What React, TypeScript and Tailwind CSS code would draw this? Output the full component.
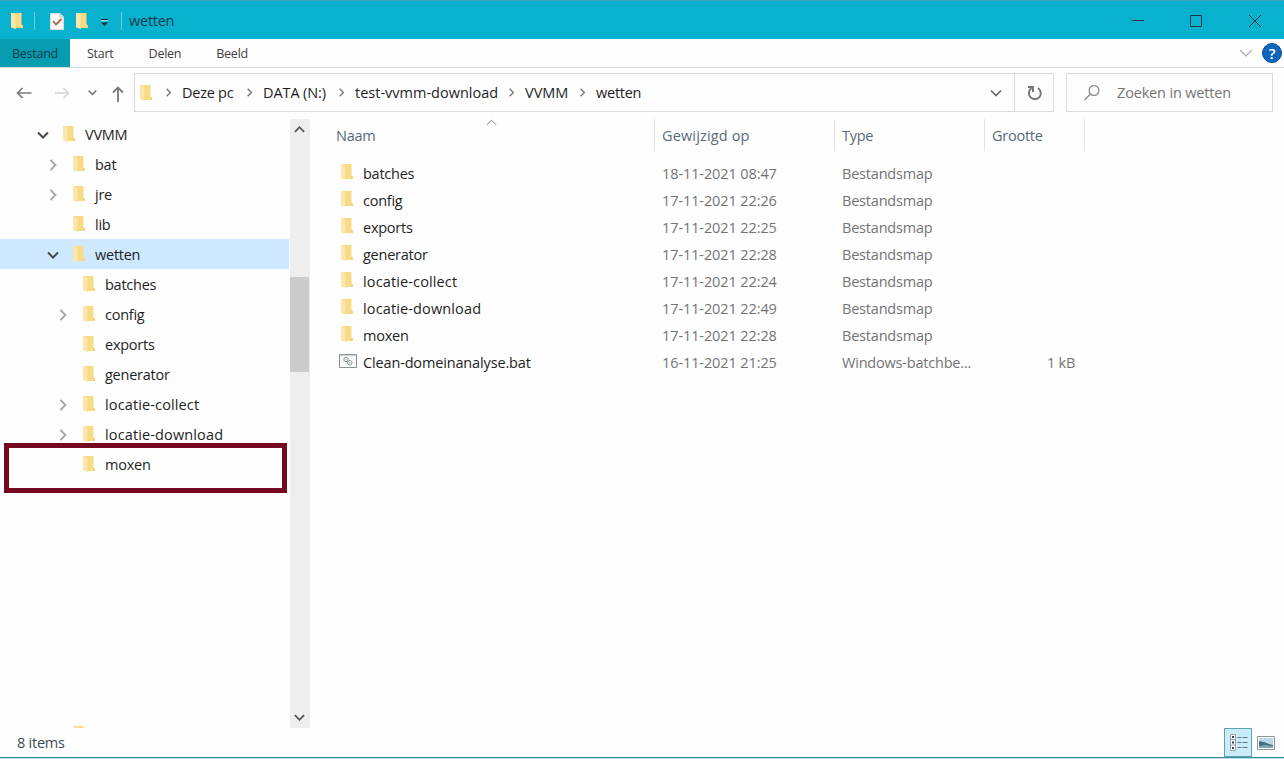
// ============================================
// File Explorer window: title bar, ribbon, address bar, folder tree and file list
// ============================================

import type { ReactNode } from "react"
import { clsx } from "clsx"

type TreeItem = {
  name: string
  level: 0 | 1 | 2
  state?: "open" | "closed"
  selected?: boolean
}

type FileItem = {
  name: string
  date: string
  type: string
  size?: string
}

const TREE: TreeItem[] = [
  { name: "VVMM", level: 0, state: "open" },
  { name: "bat", level: 1, state: "closed" },
  { name: "jre", level: 1, state: "closed" },
  { name: "lib", level: 1 },
  { name: "wetten", level: 1, state: "open", selected: true },
  { name: "batches", level: 2 },
  { name: "config", level: 2, state: "closed" },
  { name: "exports", level: 2 },
  { name: "generator", level: 2 },
  { name: "locatie-collect", level: 2, state: "closed" },
  { name: "locatie-download", level: 2, state: "closed" },
  { name: "moxen", level: 2 },
]

const FILES: FileItem[] = [
  { name: "batches", date: "18-11-2021 08:47", type: "Bestandsmap" },
  { name: "config", date: "17-11-2021 22:26", type: "Bestandsmap" },
  { name: "exports", date: "17-11-2021 22:25", type: "Bestandsmap" },
  { name: "generator", date: "17-11-2021 22:28", type: "Bestandsmap" },
  { name: "locatie-collect", date: "17-11-2021 22:24", type: "Bestandsmap" },
  { name: "locatie-download", date: "17-11-2021 22:49", type: "Bestandsmap" },
  { name: "moxen", date: "17-11-2021 22:28", type: "Bestandsmap" },
  { name: "Clean-domeinanalyse.bat", date: "16-11-2021 21:25", type: "Windows-batchbe...", size: "1 kB" },
]

const INDENT = { 0: "pl-[36px]", 1: "pl-[46px]", 2: "pl-[56px]" }

function nameTracking(name: string) {
  if (name.startsWith("locatie")) return "tracking-[0.13px]"
  if (name.startsWith("Clean")) return "tracking-[-0.15px]"
  return ""
}

function Folder({ className }: { className?: string }) {
  return (
    <svg className={clsx("h-4 w-3 shrink-0", className)} viewBox="0 0 12 16">
      <path d="M0 0h10.500v11.500l1.500 1V15H3L0 13.500z" fill="#f8dc85" />
      <path d="M0 0h1l4 2v14l-5-1.500z" fill="#fbe6ac" />
      <path d="M5 2v13" stroke="#f1d37b" strokeWidth=".6" />
      <path d="M10 11.500l2 1V15h-2z" fill="#f1d48a" />
    </svg>
  )
}

const CHEVRONS = {
  down: "M1 3.5l5 5 5-5",
  up: "M1 8.5l5-5 5 5",
  right: "M3.5 1l5 5-5 5",
}

function Chevron({ dir, className }: { dir: keyof typeof CHEVRONS; className?: string }) {
  return (
    <svg className={clsx("shrink-0", className)} viewBox="0 0 12 12" fill="none" stroke="currentColor">
      <path d={CHEVRONS[dir]} />
    </svg>
  )
}

function TitleBar() {
  return (
    <header className="flex h-[39px] shrink-0 items-center border-t border-[#3fa5b3] bg-[#08b2cf] pl-[11px] pt-0.5 text-[#123c4a]">
      <Folder />
      <div className="ml-[11px] h-[18px] w-px bg-[#63cfdf]" />
      <svg className="ml-[15px] h-[17px] w-[14px]" viewBox="0 0 14 17">
        <path d="M.5.5H10L13.5 4v12.5H.5z" fill="#fbf7f5" stroke="#d5dddd" />
        <path d="M10 .5V4h3.5" fill="none" stroke="#b9c8c8" />
        <path d="M3 8l3 3.5L11.5 6" fill="none" stroke="#a8654f" strokeWidth="1.8" />
      </svg>
      <Folder className="ml-3" />
      <svg className="ml-[13px] mt-1 h-2 w-[7px]" viewBox="0 0 7 8">
        <path d="M0 .5h7" stroke="#0d2c36" />
        <path d="M0 1.5h7" stroke="#9fdde8" />
        <path d="M0 3.5h7L3.5 7z" fill="#0d2c36" />
      </svg>
      <div className="ml-[13px] h-[18px] w-px bg-[#63cfdf]" />
      <span className="ml-[7px]">wetten</span>
      <div className="ml-auto flex items-center text-[#153a44]">
        <svg className="mr-[46px] size-3" viewBox="0 0 12 12" stroke="currentColor">
          <path d="M0 5.5h12" />
        </svg>
        <svg className="mr-[47px] size-3" viewBox="0 0 12 12" fill="none" stroke="currentColor">
          <path d="M.5.5h11v11H.5z" />
        </svg>
        <svg className="mr-[23px] size-3" viewBox="0 0 12 12" stroke="currentColor">
          <path d="M0 0l12 12M12 0L0 12" />
        </svg>
      </div>
    </header>
  )
}

function Ribbon() {
  return (
    <nav className="flex h-[29px] shrink-0 items-center border-b border-[#d9dbdb] text-[12.5px] tracking-[-0.25px] text-[#3d3d3d]">
      <div className="flex h-full w-[70px] items-center justify-center bg-[#079cb1] pt-0.5 text-[#103b45]">Bestand</div>
      <span className="ml-[17px] pt-0.5">Start</span>
      <span className="ml-[35px] pt-0.5">Delen</span>
      <span className="ml-[35px] pt-0.5">Beeld</span>
      <Chevron dir="down" className="ml-auto mr-[9px] size-[14px] text-[#a2a8ab]" />
      <div className="mr-[2px] flex size-5 items-center justify-center rounded-full border border-[#0b4e93] bg-[#0c66bd] text-[15px] font-semibold text-white">
        ?
      </div>
    </nav>
  )
}

function Crumb({ children, className }: { children: ReactNode; className?: string }) {
  return (
    <>
      <Chevron dir="right" className="size-[9px] stroke-[1.8px] text-[#777]" />
      <span className={clsx("ml-[9px] whitespace-nowrap", className)}>{children}</span>
    </>
  )
}

function AddressBar() {
  return (
    <div className="flex h-[51px] shrink-0 items-start pt-[5px]">
      <div className="flex h-[39px] w-[134px] shrink-0 items-center pl-4 text-[#7a7a7a]">
        <svg className="h-3 w-4" viewBox="0 0 16 12" fill="none" stroke="currentColor" strokeWidth="1.7">
          <path d="M15.500 6H1.500M6.500 1l-5 5 5 5" />
        </svg>
        <svg className="ml-[22px] h-3 w-4 text-[#d6d6d6]" viewBox="0 0 16 12" fill="none" stroke="currentColor" strokeWidth="1.5">
          <path d="M1 6h13.500M9.500 1l5 5-5 5" />
        </svg>
        <Chevron dir="down" className="ml-[18px] size-[9px] stroke-2" />
        <svg className="ml-[15px] mt-0.5 h-4 w-3" viewBox="0 0 12 16" fill="none" stroke="currentColor" strokeWidth="1.8">
          <path d="M6 16V1.500M1 6.500l5-5 5 5" />
        </svg>
      </div>
      <div className="flex h-[39px] w-[920px] shrink-0 items-center border border-[#d9d9d9] pl-[5px]">
        <Folder className="mr-3" />
        <Crumb className="w-[63px]">Deze pc</Crumb>
        <Crumb className="w-[74px] tracking-[-0.1px]">DATA (N:)</Crumb>
        <Crumb className="w-[152px] tracking-[0px]">test-vvmm-download</Crumb>
        <Crumb className="w-[53px] tracking-[0px]">VVMM</Crumb>
        <Crumb>wetten</Crumb>
        <Chevron dir="down" className="ml-auto mr-3 size-3 stroke-[1.7px] text-[#666]" />
        <div className="flex h-full w-[39px] items-center justify-center border-l border-[#d9d9d9] pl-0.5">
          <svg className="h-4 w-4 text-[#777]" viewBox="0 0 16 16" fill="none" stroke="currentColor" strokeWidth="2">
            <path d="M11 3.100A6 6 0 1 1 4.500 3.200" />
            <path d="M1 2h5v5" />
          </svg>
        </div>
      </div>
      <div className="ml-3 flex h-[39px] w-[207px] items-center border border-[#d9d9d9] pl-[17px] text-[#757575]">
        <svg className="size-4" viewBox="0 0 16 16" fill="none" stroke="#858585" strokeWidth="1.2">
          <circle cx="10" cy="5.500" r="4.900" />
          <path d="M6.500 9L.5 15" />
        </svg>
        <span className="ml-[17px] whitespace-nowrap tracking-[-0.17px]">Zoeken in wetten</span>
      </div>
    </div>
  )
}

function FolderTree() {
  return (
    <aside className="relative flex w-[289px] shrink-0 flex-col">
      {TREE.map((item) => (
        <div
          key={item.name}
          className={clsx("flex h-[30px] shrink-0 items-center", INDENT[item.level], item.selected && "bg-[#cde8ff]")}
        >
          <div className="flex w-[13px] justify-center pt-0.5">
            {item.state === "open" && <Chevron dir="down" className="size-3 stroke-2 text-[#45494b]" />}
            {item.state === "closed" && <Chevron dir="right" className="size-3 stroke-[1.8px] text-[#a6a6a6]" />}
          </div>
          <Folder className="ml-[14px]" />
          <span className={clsx("ml-[10px] pt-0.5", nameTracking(item.name))}>{item.name}</span>
        </div>
      ))}
      <div className="ml-[73px] mt-auto h-[2px] w-3 overflow-hidden">
        <Folder />
      </div>
      {/* highlight around the moxen folder */}
      <div className="absolute left-1 top-[324px] h-[50px] w-[283px] border-[5px] border-[#75091f]" />
    </aside>
  )
}

function Scrollbar() {
  return (
    <div className="ml-px flex w-5 shrink-0 flex-col items-center bg-[#eeeeee] pr-px text-[#555]">
      <div className="flex h-[158px] shrink-0 justify-center pt-[5px]">
        <Chevron dir="up" className="size-[11px] stroke-2" />
      </div>
      <div className="h-[95px] w-[19px] shrink-0 bg-[#cbcbcb]" />
      <Chevron dir="down" className="mb-[5px] mt-auto size-[11px] stroke-2" />
    </div>
  )
}

function BatchIcon() {
  return (
    <svg className="h-[14px] w-[18px]" viewBox="0 0 18 14" fill="none">
      <path d="M.5.5h17v13H.5z" fill="#fafafa" stroke="#8a8f91" />
      <path d="M1 1h16" stroke="#9da3a5" />
      <circle cx="7" cy="5.500" r="2.200" stroke="#8b969b" />
      <circle cx="7" cy="5.500" r=".6" fill="#8b969b" />
      <circle cx="10.800" cy="8.700" r="2.200" stroke="#8b969b" />
      <circle cx="10.800" cy="8.700" r=".6" fill="#8b969b" />
    </svg>
  )
}

function FileList() {
  return (
    <main className="flex w-[775px] flex-col">
      <div className="flex h-8 items-center text-[#5a6a79]">
        <div className="relative flex h-full w-[345px] items-center border-r border-[#e3e3e3] pl-[26px] pt-0.5">
          Naam
          <Chevron dir="up" className="absolute left-[176px] top-[-2px] size-[11px] text-[#777]" />
        </div>
        <div className="flex h-full w-[180px] items-center border-r border-[#e3e3e3] pl-[7px] pt-0.5 tracking-[0.15px]">
          Gewijzigd op
        </div>
        <div className="flex h-full w-[150px] items-center border-r border-[#e3e3e3] pl-[7px] pt-0.5">Type</div>
        <div className="flex h-full w-[100px] items-center border-r border-[#e3e3e3] pl-[7px] pt-0.5">Grootte</div>
      </div>
      <div className="mt-[9px] flex flex-col text-[#747474]">
        {FILES.map((file) => (
          <div key={file.name} className="flex h-[27px] items-center">
            <div className="flex w-[352px] items-center pl-[29px] text-[#1f1f1f]">
              <div className="flex w-[18px] pb-1 pl-0.5">
                {file.size ? (
                  <div className="-ml-0.5">
                    <BatchIcon />
                  </div>
                ) : (
                  <Folder />
                )}
              </div>
              <span className={clsx("ml-[6px]", nameTracking(file.name))}>{file.name}</span>
            </div>
            <span className="w-[180px] tracking-[-0.1px]">{file.date}</span>
            <span className="w-[150px] tracking-[-0.2px]">{file.type}</span>
            <span className="w-[83px] text-right">{file.size}</span>
          </div>
        ))}
      </div>
    </main>
  )
}

function StatusBar() {
  return (
    <footer className="flex h-[31px] shrink-0 items-start justify-between pl-[17px]">
      <span className="pt-[5px] text-[#3c4a56]">8 items</span>
      <div className="flex h-[29px] items-center">
        <div className="flex h-full w-7 items-center justify-center border border-[#5ba3b5] bg-[#c9ecf8] pl-0.5">
          <svg className="h-[17px] w-[18px]" viewBox="0 0 18 17" fill="none">
            <path d="M.5.5h5v16h-5zM.5 5.500h5M.5 11h5" fill="#fff" stroke="#98a0a3" />
            <path d="M2 3h2M2 8.500h2M2 14h2" stroke="#33444c" strokeWidth="2" />
            <path d="M7.500 3.500h4m1 0h5M7.500 8.500h4m1 0h5M7.500 13.500h4m1 0h5" stroke="#65777f" />
          </svg>
        </div>
        <svg className="ml-[5px] mr-[9px] h-[14px] w-[18px]" viewBox="0 0 18 14">
          <path d="M.5.5h17v13H.5z" fill="#fff" stroke="#8b9599" />
          <path d="M2 2h14v10H2z" fill="#b9d9eb" />
          <path d="M2 5l5 1 5 2 4 1v3H2z" fill="#426f80" />
          <path d="M2 10l6-1 8 1v2H2z" fill="#7ba6b6" />
        </svg>
      </div>
    </footer>
  )
}

export default function App() {
  return (
    <div className="relative flex h-[759px] w-[1284px] flex-col overflow-hidden bg-[#fefefe] font-['Open_Sans',sans-serif] text-[14.5px] leading-5 tracking-[-0.25px] text-[#1f1f1f]">
      <TitleBar />
      <Ribbon />
      <AddressBar />
      <div className="flex h-[609px] shrink-0">
        <FolderTree />
        <Scrollbar />
        <FileList />
      </div>
      <StatusBar />
      <div className="absolute inset-x-0 bottom-0 h-[2px] border-t border-[#3a8e9c] bg-[#b5dde3]" />
    </div>
  )
}
